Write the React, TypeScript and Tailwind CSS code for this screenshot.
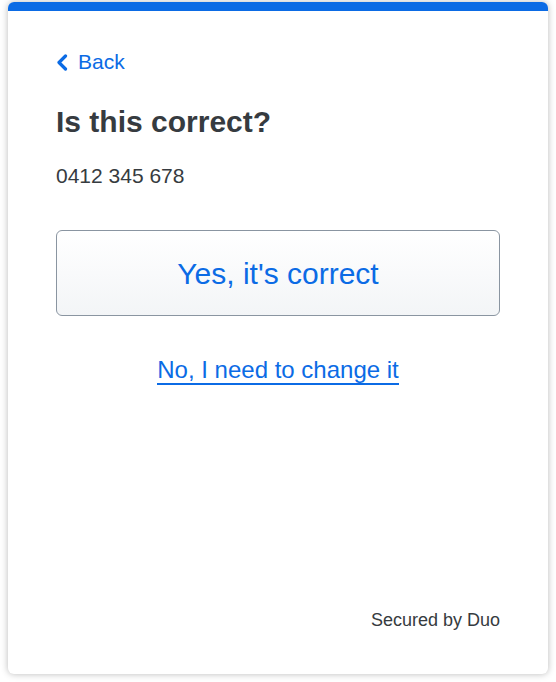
import React from "react";

export default function App() {
  return (
    <div className="w-[556px] h-[682px] bg-white px-2 pt-[2px] pb-2" style={{ fontFamily: '"Liberation Sans", Arial, sans-serif' }}>
      <div className="h-[672px] w-[540px] rounded-[6px] overflow-hidden bg-white shadow-[0_0_7px_rgba(0,0,0,0.28)] flex flex-col">
        <div className="h-[9px] bg-[#0b6be5] shrink-0" />
        <div className="flex flex-col flex-1 px-12">
          <a className="mt-[39px] flex items-center gap-[10px] text-[21px] leading-[24px] text-[#0b6be5] cursor-pointer">
            <svg width="12" height="17" viewBox="0 0 12 17" className="shrink-0">
              <path d="M9.5 2 L3 8.5 L9.5 15" fill="none" stroke="#0b6be5" strokeWidth="3.2" strokeLinecap="round" strokeLinejoin="round" />
            </svg>
            <span>Back</span>
          </a>
          <h1 className="mt-[30px] text-[30px] leading-[36px] font-bold text-[#363b40]">Is this correct?</h1>
          <p className="mt-[24px] text-[21px] leading-[24px] text-[#363b40]">0412 345 678</p>
          <button className="mt-[42px] h-[86px] w-full rounded-[6px] border border-[#8a95a1] bg-gradient-to-b from-white to-[#f3f5f7] text-[30px] text-[#0b6be5]">
            Yes, it's correct
          </button>
          <div className="mt-[40px] flex justify-center">
            <a className="inline-block text-[24px] leading-[27px] text-[#0b6be5] border-b-2 border-[#0b6be5] cursor-pointer">
              No, I need to change it
            </a>
          </div>
          <div className="mt-auto pb-[43px] flex justify-end">
            <span className="text-[18px] leading-[22px] text-[#363b40]">Secured by Duo</span>
          </div>
        </div>
      </div>
    </div>
  );
}
